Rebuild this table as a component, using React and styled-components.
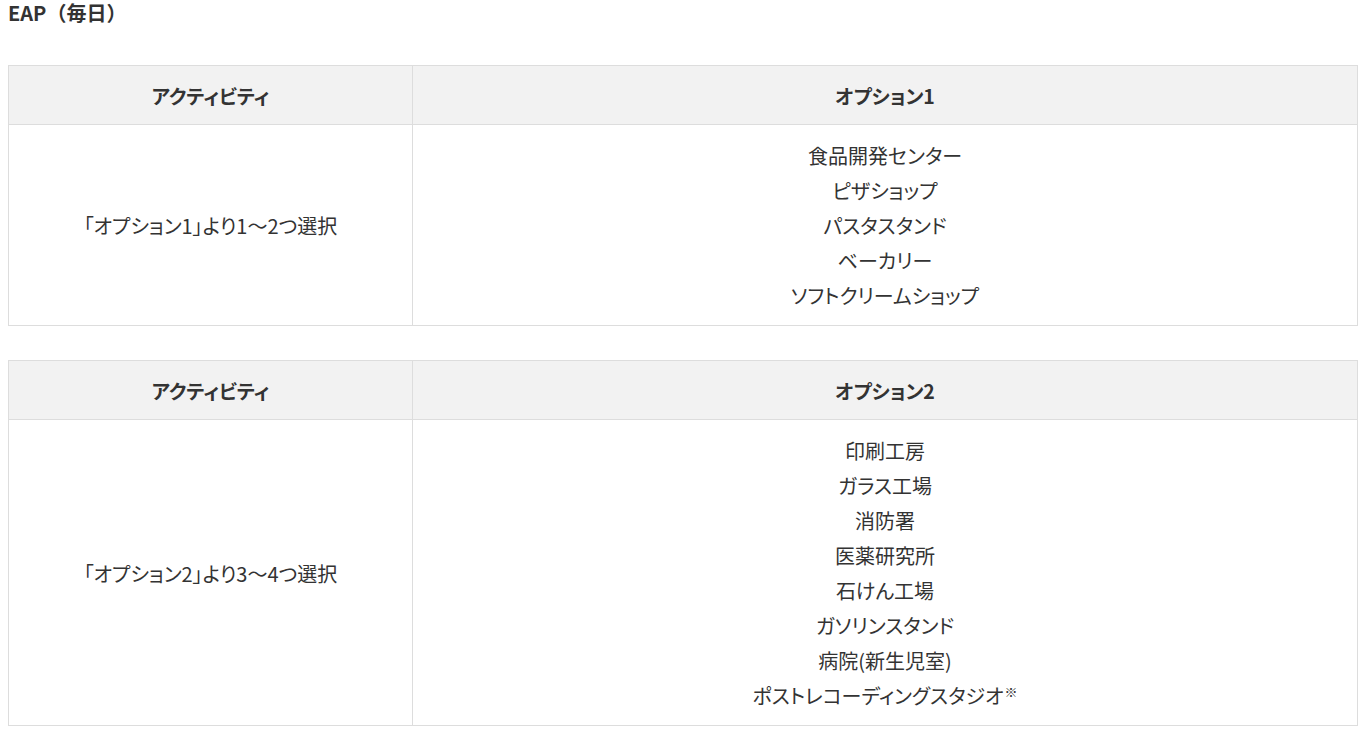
import React from 'react';
import styled, { createGlobalStyle } from 'styled-components';

const GlobalStyle = createGlobalStyle`
  body {
    margin: 0;
    background: #fff;
    color: #333;
    font-family: "Noto Sans CJK JP", "Noto Sans", sans-serif;
  }
`;

const Page = styled.div`
  padding: 0 10px 0 8px;
`;

const Title = styled.h2`
  margin: 0 0 40px;
  font-size: 20px;
  font-weight: 700;
  line-height: 25px;
`;

const Table = styled.table`
  width: 100%;
  border-collapse: collapse;
  margin-bottom: 34px;
  font-size: 20px;
  font-feature-settings: "palt";
`;

const HeadCell = styled.th`
  background: #f2f2f2;
  border: 1px solid #ddd;
  height: 58px;
  padding: 0;
  font-size: 19.5px;
  font-weight: 700;
  text-align: center;
  width: ${(p) => p.width || 'auto'};
`;

const Cell = styled.td`
  border: 1px solid #ddd;
  text-align: center;
  vertical-align: middle;
  padding: 13px 0 12px;
  line-height: 35px;
`;

const Item = styled.div``;

const Note = styled.sup`
  font-size: 13px;
  line-height: 0;
  vertical-align: 7px;
  margin-left: 1px;
`;

const tables = [
  {
    head: 'オプション1',
    rule: '「オプション1」より1〜2つ選択',
    items: ['食品開発センター', 'ピザショップ', 'パスタスタンド', 'ベーカリー', 'ソフトクリームショップ'],
  },
  {
    head: 'オプション2',
    rule: '「オプション2」より3〜4つ選択',
    items: [
      '印刷工房',
      'ガラス工場',
      '消防署',
      '医薬研究所',
      '石けん工場',
      'ガソリンスタンド',
      '病院(新生児室)',
      { text: 'ポストレコーディングスタジオ', note: '※' },
    ],
  },
];

export default function App() {
  return (
    <>
      <GlobalStyle />
      <Page>
        <Title>EAP（毎日）</Title>
        {tables.map((t) => (
          <Table key={t.head}>
            <thead>
              <tr>
                <HeadCell width="403px">アクティビティ</HeadCell>
                <HeadCell>{t.head}</HeadCell>
              </tr>
            </thead>
            <tbody>
              <tr>
                <Cell>{t.rule}</Cell>
                <Cell>
                  {t.items.map((it) =>
                    typeof it === 'string' ? (
                      <Item key={it}>{it}</Item>
                    ) : (
                      <Item key={it.text}>
                        {it.text}
                        <Note>{it.note}</Note>
                      </Item>
                    )
                  )}
                </Cell>
              </tr>
            </tbody>
          </Table>
        ))}
      </Page>
    </>
  );
}
